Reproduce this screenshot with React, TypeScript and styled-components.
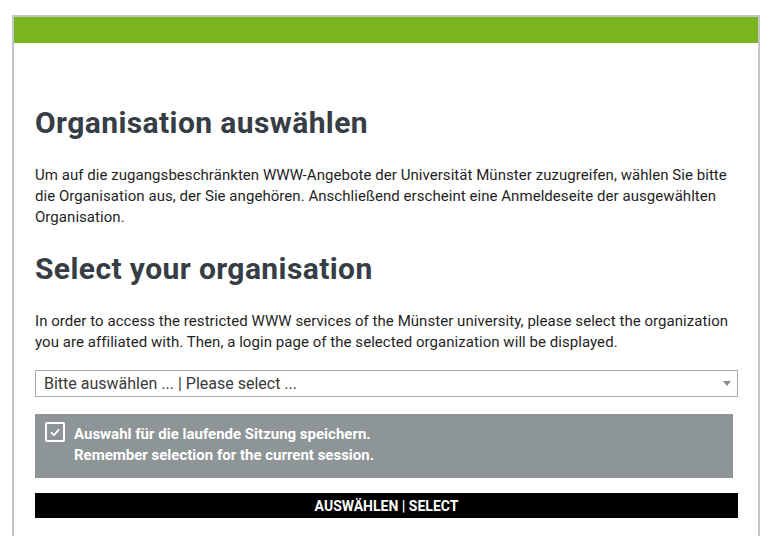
import { FC, useState } from 'react';
import styled, { createGlobalStyle } from 'styled-components';

const Global = createGlobalStyle`
  html, body {
    margin: 0;
    padding: 0;
    background: #ffffff;
  }

  body {
    font-family: Roboto, 'Liberation Sans', sans-serif;
    color: #1f1f1f;
  }
`;

const S = {
  page: styled.div`
    padding: 15px 9px 0 12px;
  `,

  frame: styled.div`
    border: 2px solid #c3c6c8;
    border-bottom: none;
    min-height: 530px;
  `,

  topBar: styled.div`
    height: 26px;
    background: #7ab51d;
  `,

  content: styled.main`
    padding: 62px 20px 0 21px;
  `,

  heading: styled.h1`
    margin: 0 0 24px;
    font-size: 30px;
    line-height: 36px;
    font-weight: 700;
    color: #363d44;
    letter-spacing: 0.4px;
  `,

  text: styled.p<{ $after?: number }>`
    margin: 0 0 ${(p) => p.$after ?? 23}px;
    font-size: 15px;
    line-height: 21px;
    color: #1f1f1f;
    letter-spacing: 0.05px;
  `,

  selectWrap: styled.div`
    position: relative;
  `,

  select: styled.select`
    display: block;
    width: 100%;
    height: 27px;
    padding: 0 24px 0 8px;
    border: 1px solid #ababab;
    border-radius: 0;
    background: #ffffff;
    font-family: inherit;
    font-size: 16px;
    color: #3a3a3a;
    appearance: none;
    outline: none;
  `,

  caret: styled.span`
    position: absolute;
    right: 7px;
    top: 11px;
    width: 0;
    height: 0;
    border-left: 4px solid transparent;
    border-right: 4px solid transparent;
    border-top: 5px solid #8a8a8a;
    pointer-events: none;
  `,

  remember: styled.label`
    display: flex;
    align-items: flex-start;
    gap: 9px;
    width: 698px;
    box-sizing: border-box;
    margin-top: 17px;
    padding: 10px 10px 12px 10px;
    background: #8d9596;
    color: #ffffff;
    font-size: 15px;
    font-weight: 700;
    line-height: 21px;
    cursor: pointer;
  `,

  box: styled.span`
    flex: none;
    display: flex;
    align-items: center;
    justify-content: center;
    width: 20px;
    height: 20px;
    margin-top: -2px;
    box-sizing: border-box;
    border: 2px solid #ffffff;
    border-radius: 2px;
  `,

  button: styled.button`
    display: block;
    width: 100%;
    height: 25px;
    margin-top: 15px;
    border: none;
    background: #000000;
    color: #ffffff;
    font-family: inherit;
    font-size: 14px;
    font-weight: 700;
    text-transform: uppercase;
    cursor: pointer;
  `,
};

const Check: FC<{ on: boolean }> = ({ on }) => (
  <S.box>
    {on && (
      <svg width="10" height="9" viewBox="0 0 10 9">
        <path
          d="M1.5 4.8 L4 7.2 L8.5 1.8"
          fill="none"
          stroke="#ffffff"
          strokeWidth="1.8"
          strokeLinecap="round"
          strokeLinejoin="round"
        />
      </svg>
    )}
  </S.box>
);

export default function App() {
  const [remember, setRemember] = useState(true);

  return (
    <>
      <Global />
      <S.page>
        <S.frame>
          <S.topBar />
          <S.content>
            <S.heading>Organisation auswählen</S.heading>
            <S.text>
              Um auf die zugangsbeschränkten WWW-Angebote der Universität
              Münster zuzugreifen, wählen Sie bitte die Organisation aus, der
              Sie angehören. Anschließend erscheint eine Anmeldeseite der
              ausgewählten Organisation.
            </S.text>
            <S.heading>Select your organisation</S.heading>
            <S.text $after={17}>
              In order to access the restricted WWW services of the Münster
              university, please select the organization you are affiliated
              with. Then, a login page of the selected organization will be
              displayed.
            </S.text>
            <S.selectWrap>
              <S.select defaultValue="">
                <option value="">Bitte auswählen ... | Please select ...</option>
              </S.select>
              <S.caret />
            </S.selectWrap>
            <S.remember onClick={() => setRemember(!remember)}>
              <Check on={remember} />
              <span>
                Auswahl für die laufende Sitzung speichern.
                <br />
                Remember selection for the current session.
              </span>
            </S.remember>
            <S.button>Auswählen | Select</S.button>
          </S.content>
        </S.frame>
      </S.page>
    </>
  );
}
